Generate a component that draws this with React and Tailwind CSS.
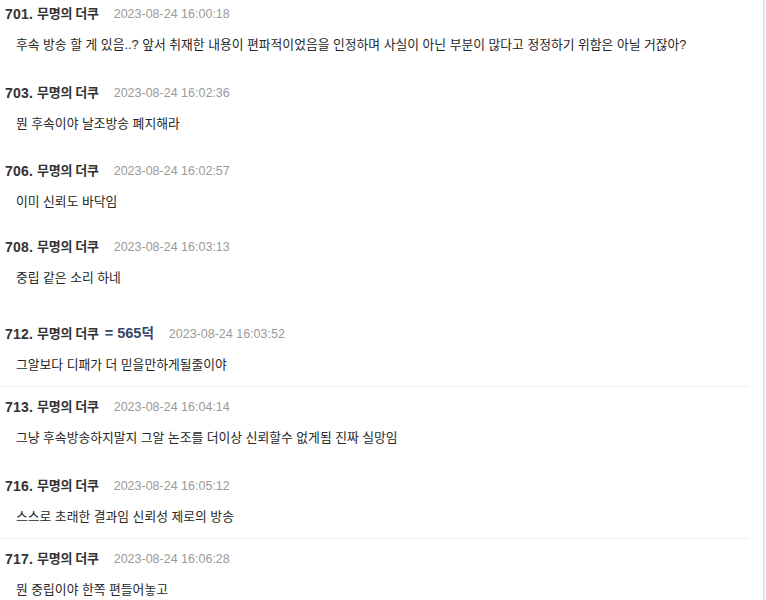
const posts = [
  { no: '701', date: '2023-08-24 16:00:18', body: '후속 방송 할 게 있음..? 앞서 취재한 내용이 편파적이었음을 인정하며 사실이 아닌 부분이 많다고 정정하기 위함은 아닐 거잖아?', gap: 'mt-[4px]' },
  { no: '703', date: '2023-08-24 16:02:36', body: '뭔 후속이야 날조방송 폐지해라', gap: 'mt-[28px]' },
  { no: '706', date: '2023-08-24 16:02:57', body: '이미 신뢰도 바닥임', gap: 'mt-[27px]' },
  { no: '708', date: '2023-08-24 16:03:13', body: '중립 같은 소리 하네', gap: 'mt-[25px]' },
  { no: '712', date: '2023-08-24 16:03:52', body: '그알보다 디패가 더 믿을만하게될줄이야', gap: 'mt-[36px]', tag: true },
  { divider: true },
  { no: '713', date: '2023-08-24 16:04:14', body: '그냥 후속방송하지말지 그알 논조를 더이상 신뢰할수 없게됨 진짜 실망임', gap: 'mt-[10px]' },
  { no: '716', date: '2023-08-24 16:05:12', body: '스스로 초래한 결과임 신뢰성 제로의 방송', gap: 'mt-[28px]' },
  { divider: true },
  { no: '717', date: '2023-08-24 16:06:28', body: '뭔 중립이야 한쪽 편들어놓고', gap: 'mt-[10px]' },
];

const font = { fontFamily: '"Liberation Sans", "Noto Sans CJK KR", sans-serif' };

const Post = ({ no, date, body, gap, tag }) => (
  <div className={gap}>
    <div className="flex items-center h-[20px] pl-[5px] text-[#333333] font-bold">
      <span className="text-[14px] tracking-[0.2px]">{no}.</span>
      <span className="text-[13px] ml-[4px] tracking-[-0.3px]">무명의 더쿠</span>
      {tag && (
        <span className="text-[14.5px] ml-[6px] text-[#35476a]">
          = 565<span className="text-[13.5px]">덕</span>
        </span>
      )}
      <span className="ml-[15px] text-[12.5px] font-normal text-[#9a9a9a]">{date}</span>
    </div>
    <div className="mt-[11px] h-[20px] flex items-center pl-[16px] text-[12.8px] text-[#262626]">
      {body}
    </div>
  </div>
);

const App = () => {
  return (
    <div className="w-[766px] h-[600px] overflow-hidden bg-white flex" style={font}>
      <div className="w-[749px] flex flex-col">
        {posts.map((p, i) =>
          p.divider ? (
            <div key={i} className="mt-[11px] h-[2px] bg-gradient-to-b from-[#e8e8e8] to-[#f6f6f6]" />
          ) : (
            <Post key={i} {...p} />
          )
        )}
      </div>
      <div className="flex-1" />
      <div className="w-[2px] h-full bg-[#e6e6e6] mr-[1px]" />
    </div>
  );
};

export default App;
